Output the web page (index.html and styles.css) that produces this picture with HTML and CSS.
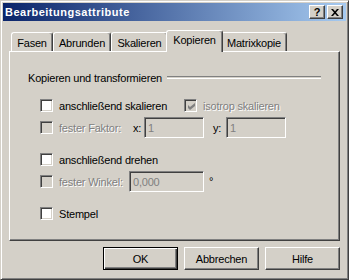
FILE: index.html
```html
<!DOCTYPE html>
<html>

<head>
  <meta charset="utf-8">
  <title>Bearbeitungsattribute</title>
  <link rel="stylesheet" href="styles.css">
</head>

<body>
  <div class="window">
    <!-- Titelleiste -->
    <div class="titlebar">
      <span class="title">Bearbeitungsattribute</span>
      <div class="title-buttons">
        <span class="tb-btn help">?</span>
        <span class="tb-btn">
          <svg width="8" height="7" viewBox="0 0 8 7">
            <path d="M0 0h2l2 2.3 2-2.3h2l-3 3.5 3 3.5h-2l-2-2.3-2 2.3h-2l3-3.5z" fill="#000" />
          </svg>
        </span>
      </div>
    </div>

    <!-- Reiter -->
    <div class="tabs">
      <div class="tab tab-fasen">Fasen</div>
      <div class="tab tab-abrunden">Abrunden</div>
      <div class="tab tab-skalieren">Skalieren</div>
      <div class="tab tab-kopieren active">Kopieren</div>
      <div class="tab tab-matrix">Matrixkopie</div>
    </div>

    <div class="panel">
      <div class="group-head">
        <span>Kopieren und transformieren</span>
        <span class="rule"></span>
      </div>

      <div class="rows">
        <div class="row">
          <div class="check-item w-skal">
            <span class="cb"></span>
            <span class="lbl">anschließend skalieren</span>
          </div>
          <div class="check-item">
            <span class="cb disabled">
              <svg width="7" height="7" viewBox="0 0 7 7">
                <path d="M0 2l2 2 5-4v3l-5 4-2-2z" fill="#808080" />
              </svg>
            </span>
            <span class="lbl disabled-text">isotrop skalieren</span>
          </div>
        </div>

        <div class="row">
          <div class="check-item">
            <span class="cb disabled"></span>
            <span class="lbl disabled-text w-faktor">fester Faktor:</span>
          </div>
          <span class="axis w-x">x:</span>
          <span class="field w-60">1</span>
          <span class="axis w-y">y:</span>
          <span class="field w-60">1</span>
        </div>

        <div class="row gap-before">
          <div class="check-item">
            <span class="cb"></span>
            <span class="lbl">anschließend drehen</span>
          </div>
        </div>

        <div class="row">
          <div class="check-item">
            <span class="cb disabled"></span>
            <span class="lbl disabled-text w-winkel">fester Winkel:</span>
          </div>
          <span class="field w-75">0,000</span>
          <span class="unit">°</span>
        </div>

        <div class="row gap-before">
          <div class="check-item">
            <span class="cb"></span>
            <span class="lbl">Stempel</span>
          </div>
        </div>
      </div>
    </div>

    <!-- Schaltflaechen -->
    <div class="actions">
      <button class="btn default">OK</button>
      <button class="btn">Abbrechen</button>
      <button class="btn">Hilfe</button>
    </div>
  </div>
</body>

</html>
```

FILE: styles.css
```css
body {
  margin: 0;
  font-family: "Liberation Sans", Arial, sans-serif;
  font-size: 11px;
  letter-spacing: -0.2px;
  color: #000;
  background-color: #d4d0c8;
}

.window {
  width: 349px;
  height: 280px;
  box-sizing: border-box;
  border: 1px solid;
  border-color: #d4d0c8 #404040 #404040 #d4d0c8;
  box-shadow: inset 1px 1px #fff, inset -1px -1px #808080;
  padding: 2px;
  display: flex;
  flex-direction: column;
  background-color: #d4d0c8;
}

/* Titelleiste */
.titlebar {
  height: 18px;
  flex: none;
  display: flex;
  align-items: center;
  justify-content: space-between;
  padding: 0 3px 0 2px;
  background: linear-gradient(to right, #0a246a, #a6caf0);
  color: #fff;
  font-weight: bold;
}

.title {
  letter-spacing: 0.5px;
}

.title-buttons {
  display: flex;
  gap: 2px;
}

.tb-btn {
  width: 16px;
  height: 14px;
  box-sizing: border-box;
  border: 1px solid;
  border-color: #fff #404040 #404040 #fff;
  box-shadow: inset -1px -1px #808080;
  background-color: #d4d0c8;
  color: #000;
  display: flex;
  align-items: center;
  justify-content: center;
}

.tb-btn.help {
  font-size: 11px;
  font-weight: bold;
  line-height: 1;
  letter-spacing: 0;
}

/* Reiter */
.tabs {
  height: 30px;
  flex: none;
  display: flex;
  align-items: flex-end;
  padding-left: 8px;
}

.tab {
  height: 19px;
  box-sizing: border-box;
  border: 1px solid;
  border-bottom: 0;
  border-color: #fff #404040 #fff #fff;
  box-shadow: inset -1px 0 #808080;
  border-radius: 3px 3px 0 0;
  background-color: #d4d0c8;
  display: flex;
  align-items: center;
  justify-content: center;
  padding-top: 1px;
}

.tab-fasen { width: 42px; }
.tab-abrunden { width: 58px; }
.tab-skalieren { width: 57px; }
.tab-kopieren { width: 53px; }
.tab-matrix { width: 66px; }

.tab.active {
  width: 57px;
  height: 22px;
  margin: 0 -2px -1px -2px;
  padding-top: 0;
  padding-bottom: 3px;
  position: relative;
  z-index: 1;
}

/* Inhalt */
.panel {
  height: 190px;
  flex: none;
  margin: 0 6px;
  box-sizing: border-box;
  border: 1px solid;
  border-color: #fff #404040 #404040 #fff;
  box-shadow: inset -1px -1px #808080;
  padding: 19px 18px 0 18px;
}

.group-head {
  height: 13px;
  display: flex;
  align-items: center;
  gap: 5px;
}

.rule {
  flex: 1;
  height: 1px;
  border-top: 1px solid #808080;
  border-bottom: 1px solid #fff;
}

.rows {
  margin-top: 11px;
  margin-left: 12px;
}

.row {
  height: 21px;
  display: flex;
  align-items: center;
  margin-top: 1px;
}

.row:first-child {
  margin-top: 0;
}

.row.gap-before {
  margin-top: 11px;
}

.check-item {
  display: flex;
  align-items: center;
  gap: 6px;
}

.w-skal { width: 144px; }

.cb {
  width: 13px;
  height: 13px;
  flex: none;
  box-sizing: border-box;
  border: 1px solid;
  border-color: #808080 #fff #fff #808080;
  box-shadow: inset 1px 1px #404040, inset -1px -1px #d4d0c8;
  background-color: #fff;
  display: flex;
  align-items: center;
  justify-content: center;
  padding: 1px 0 0 1px;
}

.cb.disabled {
  background-color: #d4d0c8;
}

.disabled-text {
  color: #808080;
  text-shadow: 1px 1px 0 #fff;
}

.w-faktor { width: 74px; }
.w-winkel { width: 70px; }

.axis { flex: none; }
.w-x { width: 11px; }
.w-y { width: 13px; margin-left: 9px; }

.field {
  height: 21px;
  flex: none;
  box-sizing: border-box;
  border: 1px solid;
  border-color: #808080 #fff #fff #808080;
  box-shadow: inset 1px 1px #404040, inset -1px -1px #d4d0c8;
  background-color: #d4d0c8;
  color: #808080;
  padding-left: 3px;
  display: flex;
  align-items: center;
}

.w-60 { width: 60px; }
.w-75 { width: 75px; }

.unit {
  margin-left: 5px;
  margin-top: -2px;
}

/* Schaltflaechen */
.actions {
  display: flex;
  justify-content: flex-end;
  gap: 6px;
  margin-top: 6px;
  padding-right: 6px;
}

.btn {
  width: 75px;
  height: 23px;
  box-sizing: border-box;
  border: 1px solid;
  border-color: #fff #404040 #404040 #fff;
  box-shadow: inset -1px -1px #808080;
  background-color: #d4d0c8;
  font-family: inherit;
  font-size: 11px;
  letter-spacing: -0.2px;
  color: #000;
  padding: 0;
  border-radius: 0;
}

.btn.default {
  border-color: #000;
  box-shadow: inset 1px 1px #fff, inset -1px -1px #404040, inset -2px -2px #808080;
}
```
